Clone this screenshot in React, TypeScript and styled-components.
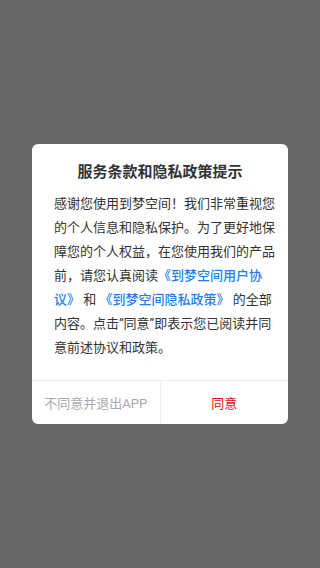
import React from "react";
import styled, { createGlobalStyle } from "styled-components";

const Global = createGlobalStyle`
  html, body { margin: 0; padding: 0; }
  body { font-family: "Roboto", "Noto Sans CJK SC", sans-serif; }
`;

const Overlay = styled.div`
  width: 320px;
  height: 568px;
  background: #666666;
  display: flex;
  align-items: center;
  justify-content: center;
`;

const Dialog = styled.div`
  width: 256px;
  background: #ffffff;
  border-radius: 6px;
  overflow: hidden;
  display: flex;
  flex-direction: column;
`;

const Title = styled.div`
  padding-top: 16px;
  font-size: 15px;
  line-height: 24px;
  font-weight: bold;
  color: #333333;
  text-align: center;
`;

const Body = styled.div`
  margin-top: 8px;
  padding: 0 12px 20px 22px;
  font-size: 13px;
  line-height: 24px;
  color: #333333;
`;

const Link = styled.span`
  color: #1e7ff0;
  font-weight: 500;
`;

const Footer = styled.div`
  display: flex;
  border-top: 1px solid #eeeeee;
  height: 43px;
`;

const FooterButton = styled.div<{ $primary?: boolean }>`
  flex: 1;
  display: flex;
  align-items: center;
  justify-content: center;
  font-size: 13px;
  color: ${(p) => (p.$primary ? "#e0101a" : "#aaaaaa")};
  & + & {
    border-left: 1px solid #eeeeee;
  }
`;

export default function App() {
  return (
    <>
      <Global />
      <Overlay>
        <Dialog>
          <Title>服务条款和隐私政策提示</Title>
          <Body>
            感谢您使用到梦空间！我们非常重视您的个人信息和隐私保护。为了更好地保障您的个人权益，在您使用我们的产品前，请您认真阅读
            <Link>《到梦空间用户协议》</Link> 和 <Link>《到梦空间隐私政策》</Link> 的全部内容。点击“同意”即表示您已阅读并同意前述协议和政策。
          </Body>
          <Footer>
            <FooterButton>不同意并退出APP</FooterButton>
            <FooterButton $primary>同意</FooterButton>
          </Footer>
        </Dialog>
      </Overlay>
    </>
  );
}
